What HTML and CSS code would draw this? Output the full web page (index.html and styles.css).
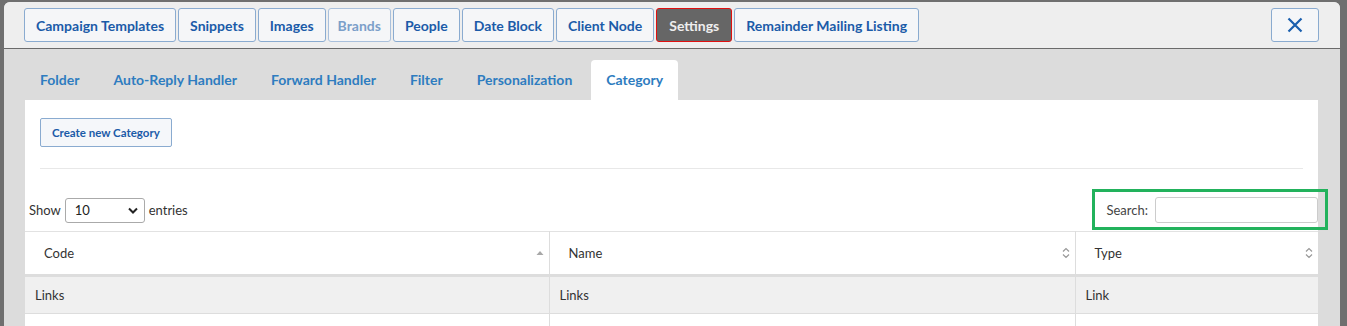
FILE: index.html
```html
<!DOCTYPE html>
<html lang="en">
<head>
    <meta charset="UTF-8">
    <title>Settings - Category</title>
    <link rel="stylesheet" href="styles.css">
</head>
<body>
    <div class="modal">
        <div class="modal-head">
            <nav class="main-tabs">
                <button class="main-tab">Campaign Templates</button>
                <button class="main-tab">Snippets</button>
                <button class="main-tab">Images</button>
                <button class="main-tab disabled">Brands</button>
                <button class="main-tab">People</button>
                <button class="main-tab">Date Block</button>
                <button class="main-tab">Client Node</button>
                <button class="main-tab active">Settings</button>
                <button class="main-tab">Remainder Mailing Listing</button>
            </nav>
            <button class="close-btn" aria-label="Close">
                <svg width="16" height="16" viewBox="0 0 16 16"><path d="M1.5 1.5 L14.5 14.5 M14.5 1.5 L1.5 14.5" stroke="#1a5fae" stroke-width="2.2" fill="none"/></svg>
            </button>
        </div>

        <div class="modal-body">
            <ul class="sub-tabs">
                <li>Folder</li>
                <li>Auto-Reply Handler</li>
                <li>Forward Handler</li>
                <li>Filter</li>
                <li>Personalization</li>
                <li class="active">Category</li>
            </ul>

            <div class="panel">
                <div class="panel-top">
                    <button class="create-btn">Create new Category</button>
                    <hr>
                </div>

                <div class="table-tools">
                    <div class="length">
                        Show
                        <span class="select">10
                            <svg width="10" height="7" viewBox="0 0 10 7"><path d="M1 1.5 L5 5.5 L9 1.5" stroke="#222" stroke-width="2" fill="none"/></svg>
                        </span>
                        entries
                    </div>
                    <div class="search">
                        <span>Search:</span>
                        <span class="search-input"></span>
                        <span class="highlight"></span>
                    </div>
                </div>

                <table class="grid">
                    <thead>
                        <tr>
                            <th class="col-code">Code
                                <svg class="sort" width="8" height="6" viewBox="0 0 8 6"><path d="M0.5 5 L4 1 L7.5 5 Z" fill="#a8a8a8"/></svg>
                            </th>
                            <th class="col-name">Name
                                <svg class="sort" width="8" height="11" viewBox="0 0 8 11"><path d="M1 4 L4 1 L7 4 M1 7 L4 10 L7 7" stroke="#999" stroke-width="1.2" fill="none"/></svg>
                            </th>
                            <th class="col-type">Type
                                <svg class="sort" width="8" height="11" viewBox="0 0 8 11"><path d="M1 4 L4 1 L7 4 M1 7 L4 10 L7 7" stroke="#999" stroke-width="1.2" fill="none"/></svg>
                            </th>
                        </tr>
                    </thead>
                    <tbody>
                        <tr class="odd">
                            <td>Links</td>
                            <td>Links</td>
                            <td>Link</td>
                        </tr>
                        <tr>
                            <td>&nbsp;</td>
                            <td>&nbsp;</td>
                            <td>&nbsp;</td>
                        </tr>
                    </tbody>
                </table>
            </div>
        </div>
    </div>
</body>
</html>
```

FILE: styles.css
```css
body {
    margin: 0; padding: 2px 7px 0 4px;
    background: #6f6f6f;
    font-family: Lato, "Open Sans", sans-serif;
    height: 324px; overflow: hidden;
}
.modal {
    background: #dcdcdc; border-radius: 6px 6px 0 0; overflow: hidden;
    height: 400px;
}
.modal-head {
    background: #eeeeee; border-bottom: 1px solid #6a6a6a;
    display: flex; justify-content: space-between; align-items: center;
    padding: 6px 21px 6px 20px; height: 34px;
}
.main-tabs { display: flex; gap: 2px; }
.main-tab {
    font-family: inherit; font-size: 14px; font-weight: bold; color: #1b5ba8;
    background: #f5f6f8; border: 1px solid #8aabd0; border-radius: 3px;
    height: 34px; padding: 0 11px; cursor: pointer;
}
.main-tab.disabled { color: #7b9fc9; border-color: #a9c0dc; padding: 0 9px; }
.main-tab.active { background: #666666; color: #eeeeee; border-color: #e01010; padding: 0 12px; }
.close-btn {
    width: 48px; height: 34px; background: #f5f6f8;
    border: 1px solid #8aabd0; border-radius: 3px;
    display: flex; align-items: center; justify-content: center; padding: 0;
}

.modal-body { padding: 11px 22px 0 21px; }
.sub-tabs {
    list-style: none; margin: 0; padding: 0;
    display: flex; gap: 4px; height: 40px;
}
.sub-tabs li {
    font-size: 14px; font-weight: bold; color: #2e7cc0;
    padding: 0 15px; line-height: 40px; border-radius: 4px 4px 0 0;
}
.sub-tabs li.active { background: #ffffff; }

.panel { background: #ffffff; }
.panel-top { padding: 18px 15px 0; }
.create-btn {
    font-family: inherit; font-size: 11.5px; font-weight: bold; color: #1b5ba8;
    background: #f5f7fa; border: 1px solid #8aabd0; border-radius: 2px;
    height: 29px; padding: 0 11px;
}
hr { border: 0; border-top: 1px solid #e8e8e8; margin: 21px 0 0; }

.table-tools {
    display: flex; justify-content: space-between; align-items: center;
    padding: 28px 0 0 4px; height: 26px; margin-bottom: 8px;
    font-size: 13px; color: #333;
}
.length { display: flex; align-items: center; gap: 4px; }
.select {
    width: 80px; height: 25px; box-sizing: border-box;
    border: 1px solid #aaaaaa; border-radius: 3px;
    display: flex; align-items: center; justify-content: space-between;
    padding: 0 6px 0 9px; color: #222;
}
.search { position: relative; display: flex; align-items: center; gap: 7px; color: #444; }
.search-input {
    width: 163px; height: 26px; box-sizing: border-box;
    border: 1px solid #cccccc; border-radius: 3px;
}
.highlight {
    position: absolute; top: -8px; left: -14px; right: -10px; bottom: -7px;
    border: 3px solid #22b25c; pointer-events: none;
}

.grid {
    width: 100%; border-collapse: collapse; table-layout: fixed;
    font-size: 13px; color: #333; border-top: 1px solid #e2e2e2;
}
.col-code { width: 524px; }
.col-name { width: 526px; }
.grid th {
    font-weight: normal; text-align: left; height: 44px; padding: 0 18px 0 19px;
    position: relative; border-bottom: 3px solid #dddddd; box-sizing: border-box;
}
.grid th + th, .grid td + td { border-left: 1px solid #dddddd; }
.grid .sort { position: absolute; right: 5px; top: 50%; transform: translateY(-50%); }
.grid td { height: 38px; padding: 0 10px; border-bottom: 1px solid #dddddd; box-sizing: border-box; }
.grid tr.odd td { background: #f0f0f0; }
```
